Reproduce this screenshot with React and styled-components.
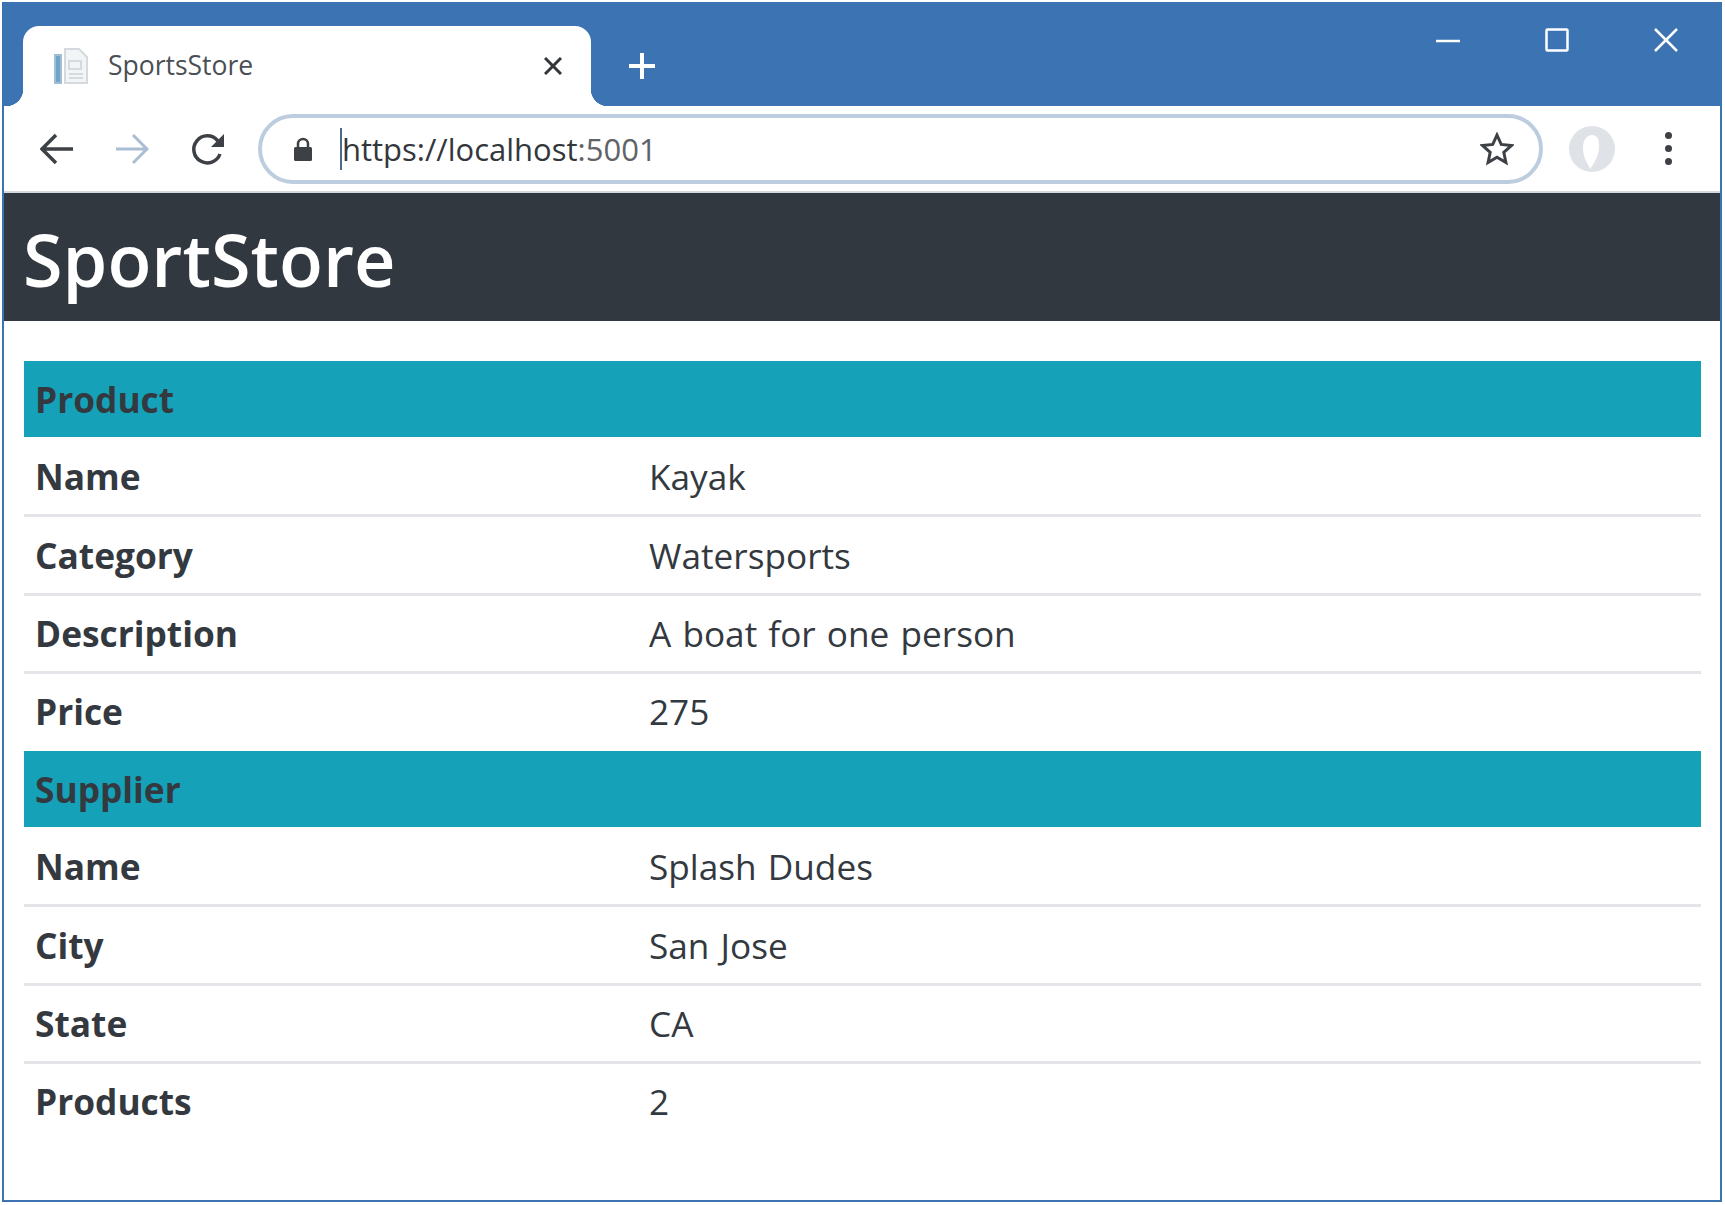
import React from 'react';
import styled, { createGlobalStyle } from 'styled-components';

const FONT = '"Open Sans", "Noto Sans", "Liberation Sans", sans-serif';
const BLUE = '#3b73b3';
const INK = '#33393f';

const PRODUCT = [
    ['Name', 'Kayak'],
    ['Category', 'Watersports'],
    ['Description', 'A boat for one person'],
    ['Price', '275'],
];

const SUPPLIER = [
    ['Name', 'Splash Dudes'],
    ['City', 'San Jose'],
    ['State', 'CA'],
    ['Products', '2'],
];

const GlobalStyle = createGlobalStyle`
    html, body {
        margin: 0;
        padding: 0;
        background: #fff;
    }
`;

const Frame = styled.div`
    box-sizing: border-box;
    width: 1720px;
    height: 1200px;
    margin: 2px 0 0 2px;
    border: 2px solid ${BLUE};
    border-top: 0;
    font-family: ${FONT};
    color: ${INK};
    overflow: hidden;
`;

const TabStrip = styled.div`
    display: flex;
    height: 104px;
    background: ${BLUE};
    padding-left: 19px;
`;

const Tab = styled.div`
    position: relative;
    box-sizing: border-box;
    display: flex;
    align-items: center;
    width: 568px;
    height: 80px;
    margin-top: 24px;
    padding: 0 29px 0 30px;
    background: #fff;
    border-radius: 16px 16px 0 0;

    &::before,
    &::after {
        content: '';
        position: absolute;
        bottom: 0;
        width: 17px;
        height: 17px;
        background: radial-gradient(circle at 0 0, ${BLUE} 17px, #fff 17.5px);
    }

    &::before {
        left: -17px;
    }

    &::after {
        right: -17px;
        background: radial-gradient(circle at 100% 0, ${BLUE} 17px, #fff 17.5px);
    }
`;

const TabTitle = styled.span`
    flex: 1;
    margin: 0 0 2px 17px;
    font-size: 26.5px;
    color: #4a4f54;
`;

const NewTab = styled.div`
    display: flex;
    align-items: center;
    height: 80px;
    margin: 24px 0 0 37px;
`;

const WindowControls = styled.div`
    display: flex;
    gap: 85px;
    margin: 26px 42px 0 auto;
    height: 24px;
`;

const Toolbar = styled.div`
    box-sizing: border-box;
    display: flex;
    align-items: center;
    height: 87px;
    padding: 0 0 0 36px;
    border-bottom: 2px solid #d5d8dc;
`;

const NavButton = styled.div`
    display: flex;
    width: ${(p) => p.$width}px;
    flex: none;
`;

const Omnibox = styled.div`
    box-sizing: border-box;
    display: flex;
    align-items: center;
    width: 1285px;
    height: 70px;
    padding: 0 25px 0 30px;
    border: 4px solid #bccde0;
    border-radius: 35px;
`;

const Url = styled.span`
    flex: 1;
    margin-left: 26px;
    border-left: 2px solid #4a6a90;
    font-size: 31px;
    line-height: 42px;
    color: #5f6368;

    b {
        font-weight: 400;
        color: #33373c;
    }
`;

const Avatar = styled.div`
    display: flex;
    margin: 0 0 0 25px;
`;

const MenuDots = styled.div`
    display: flex;
    flex-direction: column;
    gap: 6px;
    margin-left: 49px;

    span {
        width: 7px;
        height: 7px;
        border-radius: 50%;
        background: #3d4146;
    }
`;

const Header = styled.header`
    box-sizing: border-box;
    height: 128px;
    padding: 24px 0 0 19px;
    background: #32383f;
    color: #fff;
`;

const Brand = styled.h1`
    margin: 0;
    font-size: 72px;
    font-weight: 600;
    line-height: 84px;
`;

const Content = styled.main`
    padding: 40px 0 0 20px;
`;

const Table = styled.table`
    width: 1677px;
    border-collapse: collapse;
    table-layout: fixed;
    font-size: 35.2px;
    word-spacing: 2px;

    th {
        font-size: 35.3px;
        word-spacing: 0;
    }
`;

const SectionRow = styled.tr`
    background: #15a2b8;

    th {
        height: 76px;
        padding: 0 12px 0 11px;
        text-align: left;
        font-weight: 700;
        box-sizing: border-box;
    }
`;

const DataRow = styled.tr`
    border-bottom: ${(p) => (p.$last ? '0' : '3px solid #e3e5e9')};

    th,
    td {
        height: 78.5px;
        padding: 0 12px ${(p) => (p.$last ? '3px' : '0')} 12px;
        box-sizing: border-box;
        text-align: left;
    }

    th {
        padding-left: 11px;
        font-weight: 700;
    }

    td {
        font-weight: 400;
    }
`;

const LabelColumn = styled.col`
    width: 613px;
`;

const Section = ({ title, rows }) => (
    <>
        <SectionRow>
            <th colSpan={2}>{title}</th>
        </SectionRow>
        {rows.map(([label, value], index) => (
            <DataRow key={label} $last={index === rows.length - 1}>
                <th>{label}</th>
                <td>{value}</td>
            </DataRow>
        ))}
    </>
);

const Icon = ({ size = 36, height, stroke = '#3d4146', width = 3, children }) => (
    <svg
        width={size}
        height={height || size}
        viewBox={`0 0 ${size} ${height || size}`}
        fill="none"
        stroke={stroke}
        strokeWidth={width}
    >
        {children}
    </svg>
);

const App = () => (
    <Frame>
        <GlobalStyle />
        <TabStrip>
            <Tab>
                <Icon size={38} width={2} stroke="#d5dade">
                    <path d="M12 2h14l8 8v26H12z" fill="#f2f4f5" />
                    <path d="M2 8h6v28H2z" fill="#6fa5c6" stroke="#9fc0d4" />
                    <path d="M16 14h12v8H16zM16 27h14M16 31h14" />
                </Icon>
                <TabTitle>SportsStore</TabTitle>
                <Icon size={18} stroke="#33373c">
                    <path d="M1 1l16 16M17 1L1 17" />
                </Icon>
            </Tab>
            <NewTab>
                <Icon size={28} stroke="#fff" width={4}>
                    <path d="M14 1v26M1 14h26" />
                </Icon>
            </NewTab>
            <WindowControls>
                <Icon size={24} stroke="#fff" width={2.5}>
                    <path d="M0 13h24" />
                </Icon>
                <Icon size={24} stroke="#fff" width={2.5}>
                    <rect x="1.5" y="1.5" width="21" height="21" rx="1" />
                </Icon>
                <Icon size={24} stroke="#fff" width={2.5}>
                    <path d="M1 1l22 22M23 1L1 23" />
                </Icon>
            </WindowControls>
        </TabStrip>
        <Toolbar>
            <NavButton $width={75}>
                <Icon size={34}>
                    <path d="M33 17H3M16 3L2 17l14 14" strokeWidth="3.5" />
                </Icon>
            </NavButton>
            <NavButton $width={75}>
                <Icon size={34} stroke="#a9bdd3">
                    <path d="M1 17h30M18 3l14 14-14 14" strokeWidth="3" />
                </Icon>
            </NavButton>
            <NavButton $width={68}>
                <Icon size={36}>
                    <path d="M30 23a13.5 13.5 0 1 1-2.5-13.5L32 14" strokeWidth="3.5" />
                    <path d="M34 3v13H21z" fill="#3d4146" stroke="none" />
                </Icon>
            </NavButton>
            <Omnibox>
                <Icon size={22} height={26} stroke="#3d4146" width={2.5}>
                    <path d="M6 11V8a5 5 0 0 1 10 0v3" />
                    <rect x="2" y="11" width="18" height="14" rx="1.5" fill="#3d4146" stroke="none" />
                </Icon>
                <Url>
                    <b>https://localhost</b>:5001
                </Url>
                <Icon size={34} width={3}>
                    <path d="M17 3l4.2 9.4 10.2 1.1-7.6 6.9 2.1 10.1L17 25.3l-8.9 5.2 2.1-10.1-7.6-6.9 10.2-1.1z" />
                </Icon>
            </Omnibox>
            <Avatar>
                <svg width="48" height="48" viewBox="0 0 48 48">
                    <circle cx="24" cy="24" r="23" fill="#dfe3e8" />
                    <path d="M24 10c6 0 7 5 7 11s-2 12-5 17l-4 6c-2-6-7-10-7-21 0-8 4-13 9-13z" fill="#fff" />
                </svg>
            </Avatar>
            <MenuDots>
                <span />
                <span />
                <span />
            </MenuDots>
        </Toolbar>
        <Header>
            <Brand>SportStore</Brand>
        </Header>
        <Content>
            <Table>
                <colgroup>
                    <LabelColumn />
                    <col />
                </colgroup>
                <tbody>
                    <Section title="Product" rows={PRODUCT} />
                    <Section title="Supplier" rows={SUPPLIER} />
                </tbody>
            </Table>
        </Content>
    </Frame>
);

export default App;
